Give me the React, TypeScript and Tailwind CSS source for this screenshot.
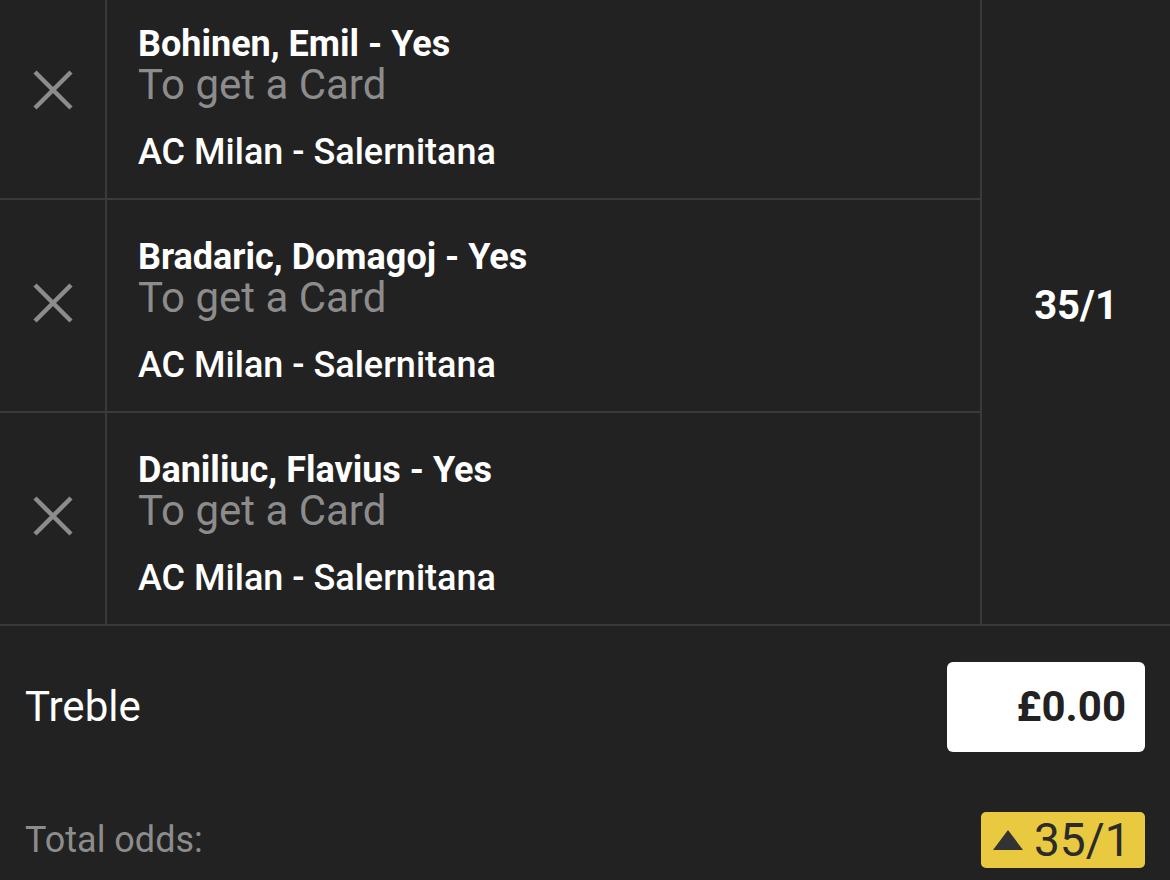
const selections = [
  { name: 'Bohinen, Emil - Yes', market: 'To get a Card', event: 'AC Milan - Salernitana' },
  { name: 'Bradaric, Domagoj - Yes', market: 'To get a Card', event: 'AC Milan - Salernitana' },
  { name: 'Daniliuc, Flavius - Yes', market: 'To get a Card', event: 'AC Milan - Salernitana' },
];

function CloseIcon() {
  return (
    <svg width="40" height="40" viewBox="0 0 40 40" fill="none">
      <path d="M2 2 L38 38 M38 2 L2 38" stroke="#8c8c8c" strokeWidth="4.5" />
    </svg>
  );
}

export default function App() {
  return (
    <div className="h-[880px] w-[1170px] overflow-hidden bg-[#222222] font-['Roboto',sans-serif] text-white">
      {/* Selections (scrolled a little) */}
      <div className="-mt-[13px] flex border-b-2 border-[#3a3a3a]">
        <div className="w-[982px] border-r-2 border-[#3a3a3a]">
          {selections.map((s, i) => (
            <div
              key={s.name}
              className={`flex ${i < selections.length - 1 ? 'border-b-2 border-[#3a3a3a]' : ''}`}
            >
              <div className="flex w-[107px] items-center justify-center border-r-2 border-[#3a3a3a] pb-[6px]">
                <CloseIcon />
              </div>
              <div className="flex-1 pl-[31px] pt-[38px] pb-[26px]">
                <div className="text-[36px] font-bold leading-[39px]">{s.name}</div>
                <div className="text-[42px] leading-[42px] text-[#8c8c8c]">{s.market}</div>
                <div className="mt-[26px] text-[36px] font-medium leading-[40px]">{s.event}</div>
              </div>
            </div>
          ))}
        </div>
        <div className="flex flex-1 items-center justify-center">
          <span className="text-[40px] font-bold">35/1</span>
        </div>
      </div>

      {/* Stake */}
      <div className="flex items-center justify-between px-[25px] pt-[36px]">
        <span className="text-[42px] leading-none">Treble</span>
        <div className="flex h-[90px] w-[198px] items-center justify-end rounded-[6px] bg-white pr-[19px]">
          <span className="text-[42px] font-bold leading-none text-[#222222]">£0.00</span>
        </div>
      </div>

      {/* Total odds */}
      <div className="mt-[60px] flex items-center justify-between px-[25px]">
        <span className="text-[36px] leading-none text-[#8c8c8c]">Total odds:</span>
        <div className="flex h-[56px] w-[164px] items-center gap-[11px] rounded-[5px] bg-[#e8c93f] pl-[12px]">
          <svg width="30" height="20" viewBox="0 0 30 20">
            <path d="M15 0 L30 20 L0 20 Z" fill="#333333" />
          </svg>
          <span className="text-[46px] leading-none text-[#2b2b2b]">35/1</span>
        </div>
      </div>
    </div>
  );
}
